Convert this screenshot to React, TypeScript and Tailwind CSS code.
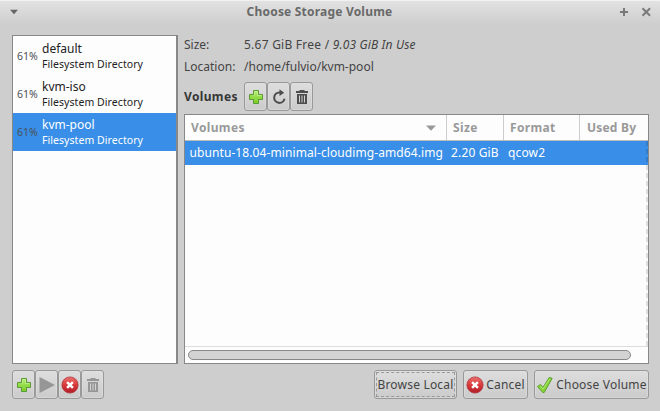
import React from "react";

function Plus() {
  return (
    <svg width="16" height="16" viewBox="0 0 16 16" className="shrink-0">
      <defs>
        <linearGradient id="pg" x1="0" y1="0" x2="0" y2="1">
          <stop offset="0" stopColor="#b4ec6c" />
          <stop offset="1" stopColor="#78cc28" />
        </linearGradient>
      </defs>
      <path d="M5.5 1.5h5v4h4v5h-4v4h-5v-4h-4v-5h4z" fill="url(#pg)" stroke="#5a9a34" strokeLinejoin="round" />
      <path d="M6.5 6.5v-4h3v4h4" fill="none" stroke="#c9f598" strokeOpacity=".7" />
    </svg>
  );
}

function Reload() {
  return (
    <svg width="16" height="16" viewBox="0 0 16 16" className="shrink-0">
      <path d="M10 3.5H8.5a5.2 5.2 0 1 0 5 6.2" fill="none" stroke="#4d4d4d" strokeWidth="2" />
      <path d="M8.5 0.3 13.2 3.8 8.5 7z" fill="#4d4d4d" />
    </svg>
  );
}

function Trash({ color }: { color: string }) {
  return (
    <svg width="16" height="16" viewBox="0 0 16 16" className="shrink-0" fill={color}>
      <path d="M5.5 1h5v1H14v2H2V2h3.5z" />
      <path fillRule="evenodd" d="M3 5h10v10H3zM5 6.5v7h1v-7zM7.5 6.5v7h1v-7zM10 6.5v7h1v-7z" />
    </svg>
  );
}

function Stop() {
  return (
    <svg width="18" height="18" viewBox="0 0 18 18" className="shrink-0">
      <defs>
        <linearGradient id="rg" x1="0" y1="0" x2="0" y2="1">
          <stop offset="0" stopColor="#ec7070" />
          <stop offset=".5" stopColor="#d93a3a" />
          <stop offset="1" stopColor="#b11c28" />
        </linearGradient>
      </defs>
      <circle cx="9" cy="9" r="8.1" fill="url(#rg)" stroke="#b0383c" strokeWidth=".8" />
      <path d="M6.1 6.1l5.8 5.8M11.9 6.1l-5.8 5.8" stroke="#fff" strokeWidth="2.5" />
    </svg>
  );
}

function Check() {
  return (
    <svg width="18" height="18" viewBox="0 0 18 18" className="shrink-0">
      <path d="M1.5 10.5 4.5 8.5 7 11.5 13.2 1.5 16.2 2.3 8.2 16.5 6.8 16.5z" fill="#86d534" stroke="#5aa030" strokeLinejoin="round" />
      <path d="M4.3 10 7 13 13.6 3" fill="none" stroke="#c4f290" strokeOpacity=".7" />
    </svg>
  );
}

const box =
  "flex items-center justify-center rounded-[3px] border border-[#999] bg-linear-to-b from-[#dedede] to-[#cbcbcb] shadow-[inset_0_0_0_1px_#e2e2e280]";

function IconButton({ children }: { children: React.ReactNode }) {
  return <button className={box + " h-[29px] w-[23px]"}>{children}</button>;
}

const pools = [
  { name: "default", selected: false },
  { name: "kvm-iso", selected: false },
  { name: "kvm-pool", selected: true },
];

export default function App() {
  return (
    <div className="flex h-[411px] w-[660px] flex-col overflow-hidden bg-[#cecece] font-['Noto_Sans',sans-serif] text-[12px] leading-[16px] whitespace-nowrap text-[#444]">
      <header className="flex h-[24px] shrink-0 items-center border-t border-[#f2f2f2] bg-linear-to-b from-[#e2e2e2] to-[#cecece] pr-[8px] pb-[2px] pl-[9px]">
        <svg width="10" height="6" viewBox="0 0 10 6">
          <path d="M1 0.8h8L5 5.3z" fill="#666" />
        </svg>
        <h1 className="flex-1 text-center font-bold tracking-[0.2px] text-[#696969]">Choose Storage Volume</h1>
        <svg width="32" height="10" viewBox="0 0 32 10" fill="none" stroke="#7a7a7a" strokeWidth="2">
          <path d="M0 5h8M4 1v8M22.5 1.2l7.6 7.6M30.1 1.2l-7.6 7.6" />
        </svg>
      </header>

      <main className="flex h-[340px] shrink-0 pt-[11px] pr-[11px] pl-[12px]">
        <aside className="mr-[6px] h-[329px] w-[166px] shrink-0 border border-r-2 border-[#888] bg-[#fdfdfd] pt-px">
          {pools.map((p) => (
            <div key={p.name} className={p.selected ? "flex h-[38px] items-center bg-[#398ee7] text-white" : "flex h-[38px] items-center text-[#222]"}>
              <span className="w-[25px] pl-[4px] text-[10.5px] text-[#4c5058]">61%</span>
              <div className="pl-[4px]">
                <div className="h-[17px] leading-[17px]">{p.name}</div>
                <div className="text-[10.5px] leading-[15px] tracking-[0.06px]">Filesystem Directory</div>
              </div>
            </div>
          ))}
        </aside>

        <section className="flex h-[329px] min-w-0 flex-1 flex-col">
          <div className="flex h-[20px] items-center">
            <span className="w-[60px]">Size:</span>
            <span className="tracking-[0.24px]">5.67 GiB Free / <i className="tracking-[0.14px]">9.03 GiB In Use</i></span>
          </div>
          <div className="mt-[2px] flex h-[20px] items-center">
            <span className="w-[60px]">Location:</span>
            <span>/home/fulvio/kvm-pool</span>
          </div>
          <div className="mt-[5px] flex h-[29px] items-center">
            <b className="w-[60px] tracking-[0.35px] text-[#363636]">Volumes</b>
            <IconButton><Plus /></IconButton>
            <IconButton><Reload /></IconButton>
            <IconButton><Trash color="#4d4d4d" /></IconButton>
          </div>
          <div className="relative mt-[3px] flex h-[250px] flex-col border border-[#888] bg-[#fdfdfd]">
            <div className="flex h-[26px] shrink-0 items-center border-b border-[#bbb] font-bold tracking-[0.35px] text-[#999]">
              <div className="flex h-full w-[262px] items-center justify-between border-r border-[#ccc] pr-[10px] pl-[6px]">
                Volumes
                <svg width="10" height="6" viewBox="0 0 10 6"><path d="M0 .5h10L5 5.8z" fill="#999" /></svg>
              </div>
              <div className="flex h-full w-[57px] items-center border-r border-[#ccc] pl-[6px]">Size</div>
              <div className="flex h-full w-[76px] items-center border-r border-[#ccc] pl-[6px]">Format</div>
              <div className="pl-[7px] tracking-[0.2px]">Used By</div>
            </div>
            <div className="flex h-[24px] shrink-0 items-center bg-[#398ee7] text-white">
              <span className="w-[262px] pl-[4.5px] tracking-[0.09px]">ubuntu-18.04-minimal-cloudimg-amd64.img</span>
              <span className="w-[57px] pl-[4px] tracking-[0.15px]">2.20 GiB</span>
              <span className="pl-[4px] tracking-[0.15px]">qcow2</span>
            </div>
            <div className="flex-1" />
            <div className="flex h-[17px] items-center border-t border-[#ddd] pl-[3px]">
              <div className="h-[10px] w-[443px] rounded-full border border-[#888] bg-[#d3d3d3]" />
            </div>
            <div className="absolute top-[26px] right-0 h-[206px] w-[2px] bg-[repeating-linear-gradient(#0000001f_0_5px,transparent_5px_8px)]" />
          </div>
        </section>
      </main>

      <footer className="flex pt-[6px] pr-[11px] pl-[12px]">
        <IconButton><Plus /></IconButton>
        <IconButton>
          <svg width="16" height="18" viewBox="0 0 16 18"><path d="M0.5 1 16 9 .5 17z" fill="#969696" /></svg>
        </IconButton>
        <IconButton><Stop /></IconButton>
        <IconButton><Trash color="#969696" /></IconButton>
        <div className="flex-1" />
        <button className={box + " h-[29px] w-[83px] p-px"}>
          <span className="flex h-full w-full items-center justify-center border border-dashed border-[#999] tracking-[0.2px]">Browse Local</span>
        </button>
        <button className={box + " ml-[6px] h-[29px] w-[65px] gap-[2px] tracking-[0.2px]"}><Stop />Cancel</button>
        <button className={box + " ml-[6px] h-[29px] w-[115px] gap-[2px] tracking-[0.2px]"}><Check />Choose Volume</button>
      </footer>
    </div>
  );
}
